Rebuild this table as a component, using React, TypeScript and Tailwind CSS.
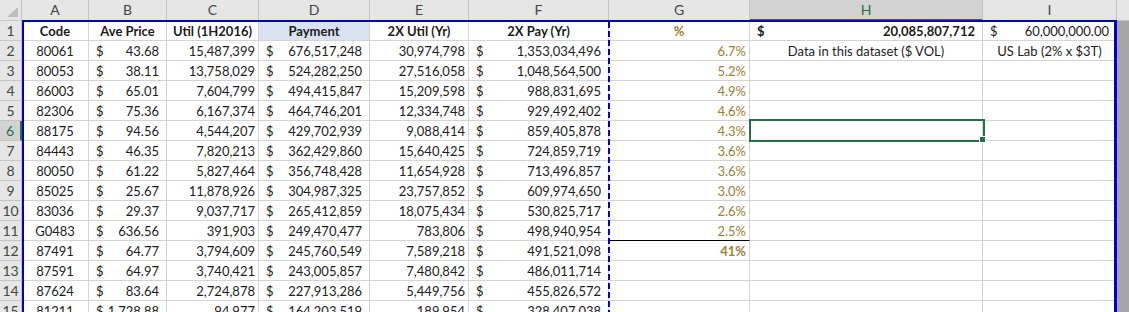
import React from "react";

type Cell =
  | null
  | { k: "c"; v: string; b?: boolean; gold?: boolean; bg?: boolean }
  | { k: "r"; v: string }
  | { k: "acc"; v: string; b?: boolean }
  | { k: "pct"; v: string; b?: boolean };

const colW = [
  "w-[67px]",
  "w-[78px]",
  "w-[92px]",
  "w-[111px]",
  "w-[99px]",
  "w-[140px]",
  "w-[141px]",
  "w-[233px]",
  "w-[134px]",
];
const letters = ["A", "B", "C", "D", "E", "F", "G", "H", "I"];

const raw: string[][] = [
  ["80061", "43.68", "15,487,399", "676,517,248", "30,974,798", "1,353,034,496", "6.7%"],
  ["80053", "38.11", "13,758,029", "524,282,250", "27,516,058", "1,048,564,500", "5.2%"],
  ["86003", "65.01", "7,604,799", "494,415,847", "15,209,598", "988,831,695", "4.9%"],
  ["82306", "75.36", "6,167,374", "464,746,201", "12,334,748", "929,492,402", "4.6%"],
  ["88175", "94.56", "4,544,207", "429,702,939", "9,088,414", "859,405,878", "4.3%"],
  ["84443", "46.35", "7,820,213", "362,429,860", "15,640,425", "724,859,719", "3.6%"],
  ["80050", "61.22", "5,827,464", "356,748,428", "11,654,928", "713,496,857", "3.6%"],
  ["85025", "25.67", "11,878,926", "304,987,325", "23,757,852", "609,974,650", "3.0%"],
  ["83036", "29.37", "9,037,717", "265,412,859", "18,075,434", "530,825,717", "2.6%"],
  ["G0483", "636.56", "391,903", "249,470,477", "783,806", "498,940,954", "2.5%"],
  ["87491", "64.77", "3,794,609", "245,760,549", "7,589,218", "491,521,098", "41%"],
  ["87591", "64.97", "3,740,421", "243,005,857", "7,480,842", "486,011,714", ""],
  ["87624", "83.64", "2,724,878", "227,913,286", "5,449,756", "455,826,572", ""],
  ["81211", "1,728.88", "94,977", "164,203,519", "189,954", "328,407,038", ""],
];

const rows: Cell[][] = [
  [
    { k: "c", v: "Code", b: true },
    { k: "c", v: "Ave Price", b: true },
    { k: "c", v: "Util (1H2016)", b: true },
    { k: "c", v: "Payment", b: true, bg: true },
    { k: "c", v: "2X Util (Yr)", b: true },
    { k: "c", v: "2X Pay (Yr)", b: true },
    { k: "c", v: "%", b: true, gold: true },
    { k: "acc", v: "20,085,807,712", b: true },
    { k: "acc", v: "60,000,000.00" },
  ],
  ...raw.map((r, i) => {
    const row: Cell[] = [
      { k: "c", v: r[0] },
      { k: "acc", v: r[1] },
      { k: "r", v: r[2] },
      { k: "acc", v: r[3] },
      { k: "r", v: r[4] },
      { k: "acc", v: r[5] },
      r[6] ? { k: "pct", v: r[6], b: r[6] === "41%" } : null,
      null,
      null,
    ];
    if (i === 0) {
      row[7] = { k: "c", v: "Data in this dataset ($ VOL)" };
      row[8] = { k: "c", v: "US Lab (2% x $3T)" };
    }
    return row;
  }),
];

function CellView({ c }: { c: Cell }) {
  if (!c) return null;
  if (c.k === "c")
    return (
      <div
        className={`flex-1 text-center whitespace-nowrap ${c.b ? "font-bold" : ""} ${
          c.gold ? "text-[#9e812e]" : ""
        }`}
      >
        {c.v}
      </div>
    );
  if (c.k === "r")
    return <div className="flex-1 text-right pr-[3px] whitespace-nowrap">{c.v}</div>;
  if (c.k === "pct")
    return (
      <div
        className={`flex-1 text-right pr-[3px] whitespace-nowrap text-[#9e812e] ${
          c.b ? "font-bold" : ""
        }`}
      >
        {c.v}
      </div>
    );
  return (
    <div
      className={`flex-1 flex justify-between pl-[7px] pr-[7px] whitespace-nowrap ${
        c.b ? "font-bold" : ""
      }`}
    >
      <span>$</span>
      <span>{c.v}</span>
    </div>
  );
}

export default function App() {
  return (
    <div
      className="relative w-[1129px] h-[312px] overflow-hidden bg-white text-[13px] leading-none text-[#1c1c1c]"
      style={{ fontFamily: "Lato, 'Open Sans', sans-serif" }}
    >
      {/* column header row */}
      <div className="flex h-[21px]">
        <div className="w-[22px] h-[21px] bg-[#e6e6e6] border-r border-b border-[#c4c4c4] flex items-end justify-end pr-[3px] pb-[3px]">
          <svg width="11" height="10" viewBox="0 0 11 10">
            <polygon points="11,0 11,10 0,10" fill="#bdbdbd" />
          </svg>
        </div>
        {letters.map((l, i) => (
          <div
            key={l}
            className={`${colW[i]} h-[21px] flex items-center justify-center text-[14px] border-r ${
              l === "H"
                ? "bg-[#d2d2d2] text-[#217346] border-b-2 border-b-[#217346] border-r-[#c4c4c4]"
                : "bg-[#e6e6e6] text-[#444] border-b border-[#c4c4c4]"
            }`}
          >
            {l}
          </div>
        ))}
        <div className="w-[12px] h-[21px] bg-[#e6e6e6] border-b border-[#c4c4c4]" />
      </div>

      {/* data rows */}
      {rows.map((r, ri) => {
        const rn = ri + 1;
        const sel = rn === 6;
        return (
          <div key={ri} className="flex h-[20px]">
            <div
              className={`w-[22px] h-[20px] flex items-center justify-center text-[14px] border-b ${
                sel
                  ? "bg-[#d2d2d2] text-[#217346] border-r-2 border-r-[#217346] border-b-[#c4c4c4]"
                  : "bg-[#e6e6e6] text-[#444] border-r border-[#c4c4c4]"
              }`}
            >
              {rn}
            </div>
            {r.map((c, ci) => (
              <div
                key={ci}
                className={`${colW[ci]} h-[20px] flex items-center pt-[2px] border-r border-b ${
                  ci === 6 && rn === 11 ? "border-b-[#000]" : "border-b-[#d4d4d4]"
                } border-r-[#d4d4d4] ${c && c.k === "c" && c.bg ? "bg-[#d9e1f2]" : ""}`}
              >
                <CellView c={c} />
              </div>
            ))}
            <div className="w-[12px] h-[20px] bg-[#a5a5a5]" />
          </div>
        );
      })}

      {/* table range border */}
      <div className="absolute left-[22px] top-[20px] w-[1095px] h-[300px] border-l-2 border-t-2 border-r-[3px] border-[#0000c4] pointer-events-none" />

      {/* dashed page break */}
      <div className="absolute left-[608px] top-[22px] w-[2px] h-[300px] bg-[repeating-linear-gradient(to_bottom,#0000c4_0px,#0000c4_6px,transparent_6px,transparent_9px)]" />

      {/* selected cell */}
      <div className="absolute left-[749px] top-[119px] w-[236px] h-[23px] border-2 border-[#217346]" />
      <div className="absolute left-[979px] top-[136px] w-[7px] h-[7px] bg-[#217346] border border-white" />
    </div>
  );
}
